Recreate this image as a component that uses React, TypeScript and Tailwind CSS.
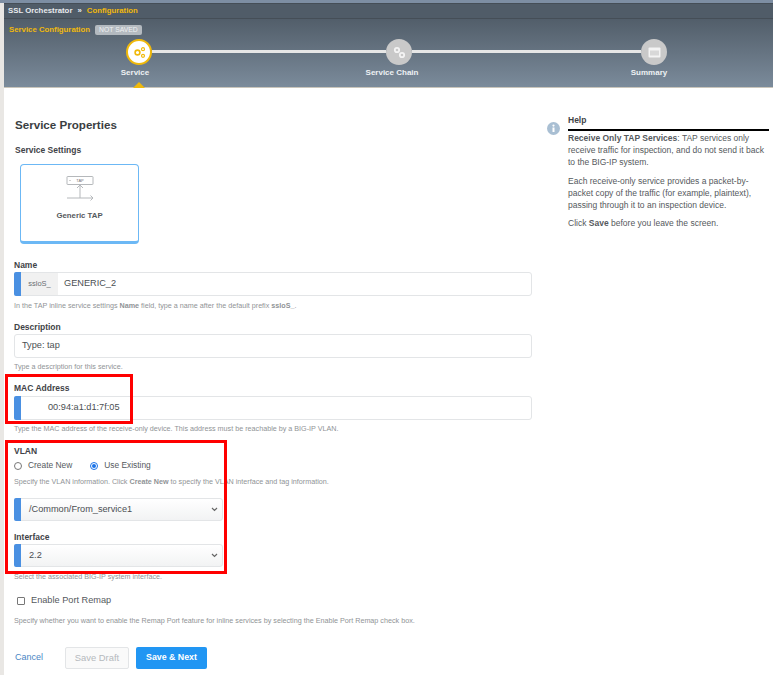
function Step({ label, labelClass, active, children }: { label: string; labelClass: string; active?: boolean; children: React.ReactNode }) {
  return (
    <div className="flex w-[26px] shrink-0 flex-col items-center">
      <div
        className={
          active
            ? "flex h-[26px] w-[26px] items-center justify-center rounded-full border-2 border-[#f0b90b] bg-white"
            : "flex h-[26px] w-[26px] items-center justify-center rounded-full bg-[#c9c9c9]"
        }
      >
        {children}
      </div>
      <span className={"mt-[2px] whitespace-nowrap text-[8px] font-bold leading-[11px] text-[#eef1f4] " + labelClass}>{label}</span>
    </div>
  );
}

function Bar() {
  return <div className="-my-px -ml-px w-[7px] shrink-0 rounded-l-[2px] bg-[#4a90e2]" />;
}

function Help({ children, className = "" }: { children: React.ReactNode; className?: string }) {
  return <p className={"text-[7.2px] leading-[10px] text-[#909396] " + className}>{children}</p>;
}

function Label({ children, className = "" }: { children: React.ReactNode; className?: string }) {
  return <div className={"text-[8.5px] font-bold leading-[12px] text-[#3f4347] " + className}>{children}</div>;
}

function TextBox({ children }: { children: React.ReactNode }) {
  return (
    <div className="flex h-[24px] w-[518px] rounded-[3px] border border-[#e3e5e7] bg-white text-[9.2px] text-[#4b4f53]">
      {children}
    </div>
  );
}

function SelectBox({ value }: { value: string }) {
  return (
    <div className="flex h-[23px] w-[209px] rounded-[3px] border border-[#e3e5e7] bg-gradient-to-b from-white to-[#f2f3f4] text-[9.2px] text-[#4b4f53]">
      <Bar />
      <span className="flex-1 self-center pl-[8px]">{value}</span>
      <svg className="mr-[4px] self-center" width="7" height="5" viewBox="0 0 7 5" fill="none">
        <path d="M1 1l2.5 2.5L6 1" stroke="#666" strokeWidth="1.2" />
      </svg>
    </div>
  );
}

export default function App() {
  return (
    <div className="relative flex h-[675px] w-[773px] overflow-hidden bg-white font-['Liberation_Sans',Arial,sans-serif]">
      <div className="w-[4px] shrink-0 bg-[#e9e7e4]" />
      <div className="flex min-w-0 flex-1 flex-col">
        <div className="-ml-[4px] h-[3px] bg-[#7d8ea3]" />

        {/* breadcrumb */}
        <div className="flex h-[16px] items-center gap-[5px] border-y border-[#454e57] bg-[#505c68] pl-[4px] text-[7.8px] font-bold">
          <span className="text-[#e8ebee]">SSL Orchestrator</span>
          <span className="text-[#e8ebee]">»</span>
          <span className="text-[#f0b90b]">Configuration</span>
        </div>

        {/* wizard header */}
        <div className="flex h-[69px] flex-col border-b border-[#c9c5bb] bg-gradient-to-b from-[#525e6a] to-[#7b8b9b]">
          <div className="flex h-[20px] items-center pl-[5px] pt-[2px]">
            <span className="text-[7.8px] font-bold text-[#f0b90b]">Service Configuration</span>
            <span className="ml-[5px] rounded-[2px] bg-[#b4bac0] px-[4px] text-[6.8px] leading-[10px] text-[#eef0f2]">NOT SAVED</span>
          </div>
          <div className="relative flex items-start pl-[122px]">
            <Step label="Service" labelClass="-ml-[8px]" active>
              <svg width="13" height="13" viewBox="0 0 13 13" fill="none" stroke="#f0b90b" strokeWidth="1.6">
                <circle cx="4.5" cy="6.5" r="2.4" />
                <circle cx="10" cy="3.2" r="1.5" strokeWidth="1.2" />
                <circle cx="10" cy="9.8" r="1.5" strokeWidth="1.2" />
              </svg>
            </Step>
            <div className="mt-[11px] h-[3px] w-[234px] bg-[#e6e6e6]" />
            <Step label="Service Chain" labelClass="-ml-[14px]">
              <svg width="13" height="13" viewBox="0 0 13 13" fill="none" stroke="#f4f4f4" strokeWidth="1.8">
                <circle cx="4" cy="4" r="2.2" />
                <circle cx="9" cy="9" r="2.2" />
              </svg>
            </Step>
            <div className="mt-[11px] h-[3px] w-[229px] bg-[#e6e6e6]" />
            <Step label="Summary" labelClass="-ml-[10px]">
              <svg width="13" height="11" viewBox="0 0 13 11">
                <rect x="0.5" y="0.5" width="12" height="10" rx="1" fill="#f4f4f4" />
                <rect x="2" y="3.5" width="9" height="5" fill="#d8d8d8" />
              </svg>
            </Step>
            <div className="absolute left-[129px] top-[43px] h-0 w-0 border-x-[6px] border-b-[6px] border-x-transparent border-b-[#f0b90b]" />
          </div>
        </div>

        <div className="flex flex-1">
          {/* form */}
          <div className="w-[543px] shrink-0 pl-[10px]">
            <h1 className="mt-[30px] pl-px text-[11.6px] font-bold leading-[14px] text-[#3a3e42]">Service Properties</h1>
            <Label className="mt-[12px] pl-px">Service Settings</Label>
            <div className="ml-[6px] mt-[8px] flex h-[80px] w-[119px] flex-col items-center rounded-[4px] border border-b-[3px] border-[#6cb8f5] bg-white pt-[11px]">
              <svg width="28" height="26" viewBox="0 0 28 26" fill="none" stroke="#b5b8bb">
                <rect x="1" y="0.5" width="26" height="8" rx="0.5" />
                <path d="M14 9v13M11 12l3-3 3 3M1 22h26M24.5 19.5L27 22l-2.5 2.5" />
                <circle cx="4" cy="4.5" r="0.6" fill="#999" stroke="none" />
                <text x="14" y="6" textAnchor="middle" fontSize="4" fill="#777" stroke="none">TAP</text>
              </svg>
              <span className="mt-[9px] text-[7.8px] font-bold leading-[10px] text-[#55595d]">Generic TAP</span>
            </div>

            <Label className="mt-[15px]">Name</Label>
            <div className="mt-[1px]">
              <TextBox>
                <Bar />
                <span className="flex w-[37px] items-center justify-center bg-[#f1f1f1] text-[7.5px] text-[#6a6e72]">ssloS_</span>
                <span className="self-center pl-[6px]">GENERIC_2</span>
              </TextBox>
            </div>
            <Help className="mt-[5px]">
              In the TAP inline service settings <b>Name</b> field, type a name after the default prefix <b>ssloS_</b>.
            </Help>

            <Label className="mt-[10px]">Description</Label>
            <div className="mt-[1px]">
              <TextBox>
                <span className="self-center pl-[7px]">Type: tap</span>
              </TextBox>
            </div>
            <Help className="mt-[4px]">Type a description for this service.</Help>

            <Label className="mt-[10px]">MAC Address</Label>
            <div className="mt-[2px]">
              <TextBox>
                <Bar />
                <span className="self-center pl-[27px]">00:94:a1:d1:7f:05</span>
              </TextBox>
            </div>
            <Help className="mt-[4px]">Type the MAC address of the receive-only device. This address must be reachable by a BIG-IP VLAN.</Help>

            <Label className="mt-[11px]">VLAN</Label>
            <div className="mt-[2px] flex h-[13px] items-center text-[8.4px] text-[#55595d]">
              <span className="h-[8px] w-[8px] rounded-full border border-[#777] bg-white" />
              <span className="ml-[6px]">Create New</span>
              <span className="ml-[18px] flex h-[8px] w-[8px] items-center justify-center rounded-full border border-[#1a73e8] bg-white">
                <span className="h-[4px] w-[4px] rounded-full bg-[#1a73e8]" />
              </span>
              <span className="ml-[6px]">Use Existing</span>
            </div>
            <Help className="mt-[5px]">
              Specify the VLAN information. Click <b>Create New</b> to specify the VLAN interface and tag information.
            </Help>

            <div className="mt-[11px]">
              <SelectBox value="/Common/From_service1" />
            </div>
            <Label className="mt-[10px]">Interface</Label>
            <div className="mt-[1px]">
              <SelectBox value="2.2" />
            </div>
            <Help className="mt-[5px]">Select the associated BIG-IP system interface.</Help>

            <div className="ml-[3px] mt-[13px] flex h-[12px] items-center text-[9.2px] text-[#55595d]">
              <span className="h-[8px] w-[8px] rounded-[1px] border border-[#777] bg-white" />
              <span className="ml-[6px]">Enable Port Remap</span>
            </div>
            <Help className="mt-[9px]">Specify whether you want to enable the Remap Port feature for inline services by selecting the Enable Port Remap check box.</Help>

            <div className="mt-[21px] flex h-[22px] items-center">
              <span className="w-[51px] pl-px text-[9px] text-[#4a86c5]">Cancel</span>
              <span className="flex h-[22px] w-[64px] items-center justify-center rounded-[2px] border border-[#e3e5e7] bg-[#fafafa] text-[9.4px] text-[#b5b9bd]">Save Draft</span>
              <span className="ml-[7px] flex h-[22px] w-[71px] items-center justify-center rounded-[2px] bg-[#2196f3] text-[8.8px] font-bold text-white">Save &amp; Next</span>
            </div>
          </div>

          {/* help panel */}
          <div className="flex pt-[27px]">
            <svg className="mt-[7px] shrink-0" width="13" height="13" viewBox="0 0 13 13">
              <circle cx="6.5" cy="6.5" r="6.5" fill="#a9bfd3" />
              <rect x="5.5" y="5.5" width="2" height="4.5" fill="#fff" />
              <circle cx="6.5" cy="3.6" r="1.1" fill="#fff" />
            </svg>
            <div className="ml-[8px] w-[201px]">
              <div className="border-b-2 border-black pb-[3px] text-[8.5px] font-bold leading-[11px] text-[#3f4347]">Help</div>
              <p className="mt-[1px] text-[8.5px] leading-[12px] text-[#55595d]">
                <b>Receive Only TAP Services</b>: TAP services only receive traffic for inspection, and do not send it back to the BIG-IP system.
              </p>
              <p className="mt-[7px] text-[8.5px] leading-[12px] text-[#55595d]">
                Each receive-only service provides a packet-by-packet copy of the traffic (for example, plaintext), passing through it to an inspection device.
              </p>
              <p className="mt-[6px] text-[8.5px] leading-[12px] text-[#55595d]">
                Click <b>Save</b> before you leave the screen.
              </p>
            </div>
          </div>
        </div>
      </div>

      {/* red annotation boxes */}
      <div className="absolute left-[5px] top-[374px] h-[50px] w-[128px] border-[3px] border-[#ff0000]" />
      <div className="absolute left-[5px] top-[440px] h-[134px] w-[222px] border-[3px] border-[#ff0000]" />
    </div>
  );
}
